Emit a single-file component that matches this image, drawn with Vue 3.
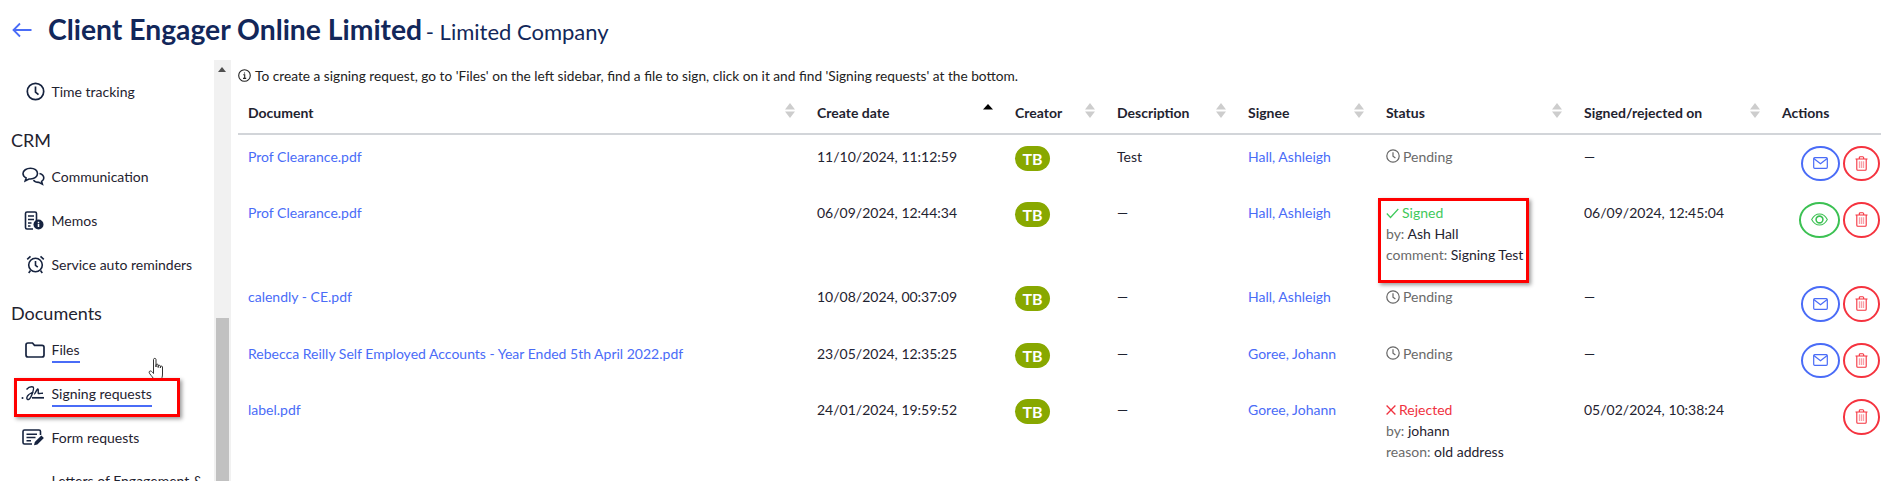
<script setup>
const rows = [
  { doc: 'Prof Clearance.pdf', date: '11/10/2024, 11:12:59', desc: 'Test', signee: 'Hall, Ashleigh', status: 'pending', on: '—', view: 'mail' },
  { doc: 'Prof Clearance.pdf', date: '06/09/2024, 12:44:34', desc: '—', signee: 'Hall, Ashleigh', status: 'signed', by: 'Ash Hall', noteLabel: 'comment', note: 'Signing Test', on: '06/09/2024, 12:45:04', view: 'eye' },
  { doc: 'calendly - CE.pdf', date: '10/08/2024, 00:37:09', desc: '—', signee: 'Hall, Ashleigh', status: 'pending', on: '—', view: 'mail' },
  { doc: 'Rebecca Reilly Self Employed Accounts - Year Ended 5th April 2022.pdf', date: '23/05/2024, 12:35:25', desc: '—', signee: 'Goree, Johann', status: 'pending', on: '—', view: 'mail' },
  { doc: 'label.pdf', date: '24/01/2024, 19:59:52', desc: '—', signee: 'Goree, Johann', status: 'rejected', by: 'johann', noteLabel: 'reason', note: 'old address', on: '05/02/2024, 10:38:24', view: '' }
]
const heads = [
  { t: 'Document' },
  { t: 'Create date', active: true },
  { t: 'Creator' },
  { t: 'Description' },
  { t: 'Signee' },
  { t: 'Status' },
  { t: 'Signed/rejected on' }
]
</script>

<template>
  <div class="page">
    <header class="top">
      <svg class="back" width="20" height="16" viewBox="0 0 20 16" fill="none" stroke="#4a6cf7" stroke-width="1.8"><path d="M19.5 8H1.5M8 1.500 1.500 8 8 14.500" /></svg>
      <h1 class="title">Client Engager Online Limited<span class="sub"> - Limited Company</span></h1>
    </header>

    <div class="body">
      <aside class="side">
        <div class="side-scroll">
          <a class="item">
            <span class="ico"><svg width="19" height="19" viewBox="0 0 19 19" fill="none" stroke="#16233f" stroke-width="1.7"><circle cx="9.5" cy="9.5" r="8.2" /><path d="M9.5 4.5v5.6l3 2.6" /></svg></span>
            <span>Time tracking</span>
          </a>
          <h2 class="group group-first">CRM</h2>
          <a class="item">
            <span class="ico"><svg width="23" height="19" viewBox="0 0 23 19" fill="none" stroke="#16233f" stroke-width="1.6"><path d="M8.5 1.2c4 0 7 2.300 7 5.400s-3 5.400-7 5.400H7l-3.800 2 .9-3C2.200 10 1 8.500 1 6.600 1 3.500 4.500 1.200 8.500 1.200Z" /><path d="M17.500 6.500c2.500.7 4.300 2.300 4.300 4.400 0 1.500-.8 2.700-2.200 3.500l.8 2.800-3.600-1.800c-2.200 0-4.300-.8-5.300-2.300" /></svg></span>
            <span>Communication</span>
          </a>
          <a class="item">
            <span class="ico"><svg width="21" height="19" viewBox="0 0 21 19" fill="none" stroke="#16233f" stroke-width="1.6"><path d="M12.500 11V2.500c0-1-.5-1.500-1.500-1.500H3C2 1 1.500 1.500 1.500 2.500v14c0 1 .5 1.500 1.500 1.500h6" /><path d="M4 5h6M4 8.500h6M4 12h3.500M4 15h2.500" /><circle cx="14.500" cy="13.500" r="5" fill="#16233f" stroke="none" /><path d="M14.500 12.800v3.300M14.500 10.700v1.200" stroke="#fff" stroke-width="1.500" /></svg></span>
            <span>Memos</span>
          </a>
          <a class="item">
            <span class="ico"><svg width="19" height="19" viewBox="0 0 19 19" fill="none" stroke="#16233f" stroke-width="1.6"><circle cx="9.500" cy="10" r="6.800" /><path d="M9.500 6v4.300l2.300 1.800M1.200 4.400 4.500 1.300M17.800 4.400 14.500 1.300M4.500 15.500 2.700 18M14.500 15.500l1.800 2.500" /></svg></span>
            <span>Service auto reminders</span>
          </a>
          <h2 class="group">Documents</h2>
          <a class="item tight">
            <span class="ico"><svg width="20" height="16" viewBox="0 0 20 16" fill="none" stroke="#16233f" stroke-width="1.700"><path d="M1 3c0-1.200.7-2 2-2h4.500l2 2.300H17c1.200 0 2 .8 2 2V13c0 1.200-.8 2-2 2H3c-1.300 0-2-.8-2-2Z" /></svg></span>
            <span class="on">Files</span>
          </a>
          <a class="item tight">
            <span class="ico"><svg width="24" height="15" viewBox="0 0 24 15" fill="none" stroke="#16233f" stroke-width="1.400"><path d="M5.500 3.500C7.500 1.200 10.500.6 12 1c1 .4.500 3-.5 6-1 3-2 5.800-4 6.500-1.700.5-2.200-1.500-1-3.500 1.300-2 4-3 6-4.300" /><path d="M13 8c1.300.4 2.300-4.500 3.700-5 1-.3.300 3.200.6 4.500 1.400.3 3-.4 4.700-.3" /><path d="M11 11.800H23" stroke-width="1.700" /><circle cx="1.500" cy="12" r="1" fill="#16233f" stroke="none" /></svg></span>
            <span class="on">Signing requests</span>
          </a>
          <a class="item tight">
            <span class="ico"><svg width="23" height="17" viewBox="0 0 23 17" fill="none" stroke="#16233f" stroke-width="1.600"><path d="M10 15H2.500C1.500 15 1 14.400 1 13.500v-11C1 1.500 1.500 1 2.500 1H17c1 0 1.500.5 1.500 1.500V6" /><path d="M4.500 5.200h10.500M4.500 8.500h9M4.500 11.800H9" /><path d="M12 16.300l.8-3.300 6.500-6.500 2.600 2.500-6.500 6.500Z" fill="#16233f" stroke="none" /></svg></span>
            <span>Form requests</span>
          </a>
          <a class="item item-wrap">
            <span class="ico"></span>
            <span class="wrap">Letters of Engagement &amp; Proposals</span>
          </a>
        </div>
        <div class="bar">
          <svg class="bar-up" width="8" height="5" viewBox="0 0 8 5"><path d="M4 0 8 5H0Z" fill="#505050" /></svg>
          <div class="thumb"></div>
        </div>
      </aside>

      <main class="main">
        <p class="hint">
          <svg class="hint-ico" width="13" height="13" viewBox="0 0 13 13" fill="none" stroke="#222" stroke-width="1.100"><circle cx="6.500" cy="6.500" r="5.800" /><path d="M5.300 5.800h1.400v3.500M5 9.400h3.200M6.500 3.400v1" /></svg>
          To create a signing request, go to 'Files' on the left sidebar, find a file to sign, click on it and find 'Signing requests' at the bottom.
        </p>
        <table class="grid">
          <colgroup>
            <col class="c1" /><col class="c2" /><col class="c3" /><col class="c4" /><col class="c5" /><col class="c6" /><col class="c7" /><col class="c8" />
          </colgroup>
          <thead>
            <tr>
              <th v-for="h in heads" :key="h.t">
                <div class="th-in">
                  <span>{{ h.t }}</span>
                  <svg v-if="h.active" class="sort" width="10" height="15" viewBox="0 0 10 15"><path d="M5 1 10 6.500H0Z" fill="#000" /></svg>
                  <svg v-else class="sort" width="10" height="15" viewBox="0 0 10 15"><path d="M5 0 10 6.500H0Z M0 8.500H10L5 15Z" fill="#cdcdcd" /></svg>
                </div>
              </th>
              <th><div class="th-in"><span>Actions</span></div></th>
            </tr>
          </thead>
          <tbody>
            <tr v-for="(r, i) in rows" :key="i">
              <td><a class="link">{{ r.doc }}</a></td>
              <td>{{ r.date }}</td>
              <td><span class="badge">TB</span></td>
              <td>{{ r.desc }}</td>
              <td><a class="link">{{ r.signee }}</a></td>
              <td>
                <div v-if="r.status === 'pending'" class="st pending">
                  <svg width="14" height="14" viewBox="0 0 14 14" fill="none" stroke="#666" stroke-width="1.200"><circle cx="7" cy="7" r="6.200" /><path d="M7 3.300v4l2.400 1.800" /></svg>
                  Pending
                </div>
                <div v-else-if="r.status === 'signed'" class="st signed">
                  <svg width="13" height="14" viewBox="0 0 13 14" fill="none" stroke="#3fc95b" stroke-width="1.200"><path d="M.8 7.500 4.500 11.500 12.300 3" /></svg>
                  Signed
                </div>
                <div v-else class="st rejected">
                  <svg width="10" height="14" viewBox="0 0 10 14" fill="none" stroke="#f0323f" stroke-width="1.300"><path d="M.6 2.500 9.400 11.500M9.400 2.500.6 11.500" /></svg>
                  Rejected
                </div>
                <template v-if="r.by">
                  <div><span class="lbl">by:</span> {{ r.by }}</div>
                  <div><span class="lbl">{{ r.noteLabel }}:</span> {{ r.note }}</div>
                </template>
              </td>
              <td>{{ r.on }}</td>
              <td class="act-cell">
                <div class="acts">
                  <button v-if="r.view === 'mail'" class="btn blue">
                    <svg width="15" height="12" viewBox="0 0 15 12" fill="none" stroke="#4a6cf7" stroke-width="1.200"><rect x=".7" y=".7" width="13.600" height="10.600" rx="1" /><path d="M.8 1.500 7.500 6.800 14.200 1.500" /></svg>
                  </button>
                  <button v-if="r.view === 'eye'" class="btn green">
                    <svg width="17" height="13" viewBox="0 0 17 13" fill="none" stroke="#3cc153" stroke-width="1.100"><path d="M.7 6.500C2.500 3 5.300 1 8.500 1s6 2 7.800 5.500C14.500 10 11.700 12 8.500 12S2.500 10 .7 6.500Z" /><circle cx="8.500" cy="6.500" r="3.400" stroke-width="1.600" /></svg>
                  </button>
                  <button class="btn red">
                    <svg width="13" height="15" viewBox="0 0 13 15" fill="none" stroke="#f5333f" stroke-width="1.100"><path d="M.5 3h12M4.300 3V1.800c0-.7.4-1.100 1-1.100h2.400c.6 0 1 .4 1 1.100V3M1.800 3v10.300c0 .6.400 1 1 1h7.400c.6 0 1-.4 1-1V3Z" /><path d="M4.500 5.300v6.800M6.500 5.300v6.800M8.500 5.300v6.800" stroke="#f8a0a8" stroke-width="1.300" /></svg>
                  </button>
                </div>
              </td>
            </tr>
          </tbody>
        </table>
      </main>
    </div>

    <svg class="hand" width="19" height="26" viewBox="0 0 19 26" fill="#fff" stroke="#333" stroke-width="1"><path d="M5.500 14V2.500C5.500 1 8 1 8 2.500V10l0-2c0-1.200 2.200-1.200 2.200 0v2.500-1.300c0-1.200 2.200-1.200 2.200 0v1.800-1c0-1.200 2.100-1.200 2.100 0V17c0 3-.8 4.500-1.500 6.200H6.500C5 20.500 3.500 19 1.800 16.800.8 15.500 1 14.300 2 14c1-.3 2 .6 3.500 2.500Z" /></svg>
    <div class="mark mark-side"></div>
    <div class="mark mark-status"></div>
  </div>
</template>

<style>
html, body { margin: 0; overflow: hidden; background: #fff; }
</style>

<style scoped>
.page { width: 1881px; height: 481px; overflow: hidden; position: relative; font-family: Lato, "Open Sans", sans-serif; font-size: 14px; line-height: 21px; color: #1f2330; background: #fff; }
.top { height: 60px; display: flex; align-items: center; padding-left: 12px; box-sizing: border-box; }
.back { margin-right: 16px; margin-top: 0; flex: none; }
.title { margin: 0; font-size: 28.300px; line-height: 40px; font-weight: 700; color: #12275a; white-space: nowrap; }
.sub { font-size: 22px; font-weight: 400; color: #12275a; margin-left: -2px; }
.body { display: flex; height: 421px; }
.side { width: 231px; flex: none; display: flex; height: 100%; }
.side-scroll { width: 214px; height: 100%; overflow: hidden; padding-top: 9px; box-sizing: border-box; }
.bar { width: 17px; height: 100%; background: #f1f1f1; position: relative; box-sizing: border-box; padding-top: 258px; display: flex; justify-content: center; }
.bar-up { position: absolute; top: 7px; left: 4px; }
.thumb { width: 13px; height: 163px; background: #c1c1c1; }
.item { display: flex; align-items: center; height: 44.25px; color: #1f2330; }
.tight { height: 43.75px; }
.item-wrap { height: 60px; align-items: flex-start; padding-top: 11px; box-sizing: border-box; }
.ico { width: 51.500px; flex: none; display: flex; justify-content: flex-end; padding-right: 6.500px; box-sizing: border-box; }
.wrap { width: 160px; }
.on { border-bottom: 2px solid #4a6cf7; padding-bottom: 1px; margin-bottom: -3px; }
.group { margin: 13px 0 2px 11px; font-size: 18px; line-height: 26px; font-weight: 400; color: #1f2330; }
.group-first { margin: 14px 0 1px 11px; }
.main { flex: 1; min-width: 0; padding: 4.5px 0 0 7px; overflow: hidden; }
.hint { margin: 0 0 6.500px; display: flex; align-items: center; white-space: pre; font-size: 13.700px; height: 21px; color: #222; }
.hint-ico { margin-right: 1px; }
.grid { width: 1643px; table-layout: fixed; border-collapse: collapse; }
.c1 { width: 569px; } .c2 { width: 198px; } .c3 { width: 102px; } .c4 { width: 131px; }
.c5 { width: 138px; } .c6 { width: 198px; } .c7 { width: 198px; } .c8 { width: 109px; }
th { height: 41.500px; padding: 0 12px 0 10px; border-bottom: 2px solid #d2d5d9; text-align: left; font-weight: 700; color: #1f2330; box-sizing: border-box; }
.th-in { display: flex; justify-content: space-between; align-items: center; }
.sort { flex: none; margin-top: -3px; }
td { padding: 11px 10px 10px; vertical-align: top; color: #1f2330; }
.link { color: #4a6cf7; }
.badge { display: inline-block; width: 35px; height: 25px; border-radius: 12.500px; background: #88a800; color: #fff; font-weight: 700; font-size: 16px; line-height: 25px; text-align: center; }
.st { display: flex; align-items: center; gap: 3px; }
.pending { color: #6a6a6a; }
.signed { color: #3fc95b; }
.rejected { color: #f0323f; }
.lbl { color: #6a6a6a; }
.act-cell { padding: 11px 1px 10px 0; }
.acts { display: flex; justify-content: flex-end; gap: 3px; }
.btn { width: 37px; height: 35.500px; padding: 0; background: #fff; border: 2.300px solid; border-radius: 50%; display: flex; align-items: center; justify-content: center; box-sizing: border-box; }
.blue { width: 39px; border-color: #4a6cf7; }
.green { width: 41px; border-color: #3cc153; }
.red { border-color: #f5333f; }
.mark { position: absolute; border: 3px solid #f00; box-sizing: border-box; box-shadow: 2px 2px 4px rgba(0, 0, 0, .4); pointer-events: none; }
.mark-side { left: 14px; top: 378px; width: 166px; height: 39px; }
.mark-status { left: 1378px; top: 198px; width: 151px; height: 85px; }
.hand { position: absolute; left: 148px; top: 357px; }
</style>
